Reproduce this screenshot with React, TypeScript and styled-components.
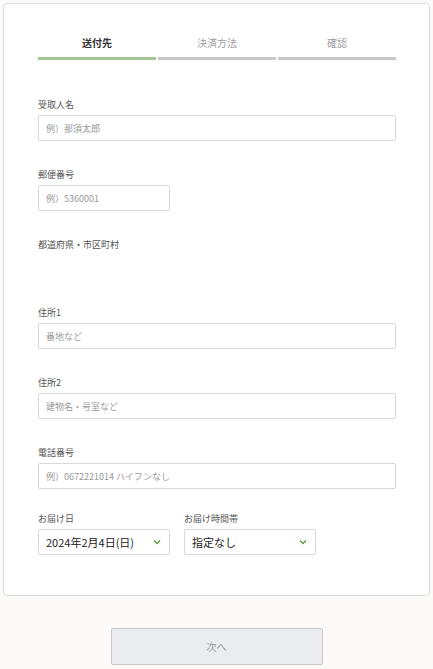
import React from "react";
import styled, { createGlobalStyle } from "styled-components";

const GlobalStyle = createGlobalStyle`
  html, body {
    margin: 0;
    padding: 0;
    background: #fbfaf8;
    font-family: "Noto Sans CJK JP", "Noto Sans", sans-serif;
  }
`;

const steps = ["送付先", "決済方法", "確認"];

const Chevron = () => (
  <svg width="8" height="6" viewBox="0 0 8 6">
    <path d="M1 1.5 L4 4.5 L7 1.5" fill="none" stroke="#5f9a3c" strokeWidth="1.4" />
  </svg>
);

const App = () => {
  return (
    <Page>
      <GlobalStyle />
      <Card>
        <Steps>
          {steps.map((s, i) => (
            <Step key={s}>
              <StepText active={i === 0}>{s}</StepText>
              <StepBar active={i === 0} />
            </Step>
          ))}
        </Steps>

        <Form>
          <Field>
            <Label>受取人名</Label>
            <Input placeholder="例）那須太郎" />
          </Field>
          <Field>
            <Label>郵便番号</Label>
            <Input placeholder="例）5360001" width={132} />
          </Field>
          <Field>
            <Label>都道府県・市区町村</Label>
            <Empty />
          </Field>
          <Field>
            <Label>住所1</Label>
            <Input placeholder="番地など" />
          </Field>
          <Field>
            <Label>住所2</Label>
            <Input placeholder="建物名・号室など" />
          </Field>
          <Field>
            <Label>電話番号</Label>
            <Input placeholder="例）0672221014 ハイフンなし" />
          </Field>
          <Row>
            <Field>
              <Label>お届け日</Label>
              <Select>
                <span>2024年2月4日(日)</span>
                <Chevron />
              </Select>
            </Field>
            <Field>
              <Label>お届け時間帯</Label>
              <Select>
                <span>指定なし</span>
                <Chevron />
              </Select>
            </Field>
          </Row>
        </Form>
      </Card>
      <Footer>
        <NextButton>次へ</NextButton>
      </Footer>
    </Page>
  );
};

export default App;

const Page = styled.div`
  width: 433px;
  min-height: 669px;
  padding: 3px 0 0;
  box-sizing: border-box;
`;

const Card = styled.div`
  margin: 0 3px 0 3px;
  background: #fff;
  border: 1px solid #dcdcdc;
  border-radius: 4px;
  padding: 32px 33px 40px 34px;
`;

const Steps = styled.div`
  display: flex;
  gap: 2px;
`;

const Step = styled.div`
  flex: 1;
  display: flex;
  flex-direction: column;
  align-items: center;
  gap: 7px;
`;

const StepText = styled.div<{ active?: boolean }>`
  font-size: 10px;
  line-height: 14px;
  color: ${(p) => (p.active ? "#333" : "#a0a0a0")};
  font-weight: ${(p) => (p.active ? 700 : 400)};
`;

const StepBar = styled.div<{ active?: boolean }>`
  width: 100%;
  height: 3px;
  background: ${(p) => (p.active ? "#a3c595" : "#c8c8c8")};
`;

const Form = styled.div`
  margin-top: 39px;
  display: flex;
  flex-direction: column;
  gap: 28px;
`;

const Field = styled.div`
  display: flex;
  flex-direction: column;
  gap: 4px;
`;

const Label = styled.div`
  font-size: 9px;
  line-height: 12px;
  color: #555;
`;

const Input = styled.input<{ width?: number }>`
  box-sizing: border-box;
  width: ${(p) => (p.width ? `${p.width}px` : "100%")};
  height: 26px;
  border: 1px solid #d9d9d9;
  border-radius: 2px;
  padding: 0 7px;
  font-family: inherit;
  font-size: 9px;
  color: #333;
  outline: none;
  &::placeholder {
    color: #9a9a9a;
  }
`;

const Empty = styled.div`
  height: 24px;
`;

const Row = styled.div`
  display: flex;
  gap: 14px;
  margin-top: -4px;
`;

const Select = styled.div`
  box-sizing: border-box;
  width: 132px;
  height: 26px;
  border: 1px solid #d9d9d9;
  border-radius: 2px;
  padding: 0 7px 0 7px;
  display: flex;
  align-items: center;
  justify-content: space-between;
  font-size: 11px;
  color: #222;
  svg {
    margin-right: 1px;
  }
`;

const Footer = styled.div`
  display: flex;
  justify-content: center;
  padding-top: 32px;
`;

const NextButton = styled.button`
  width: 212px;
  height: 37px;
  background: #eaecee;
  border: 1px solid #c9c9c9;
  border-radius: 2px;
  color: #9a9a9a;
  font-family: inherit;
  font-size: 10px;
  line-height: 1;
  padding: 0;
`;
